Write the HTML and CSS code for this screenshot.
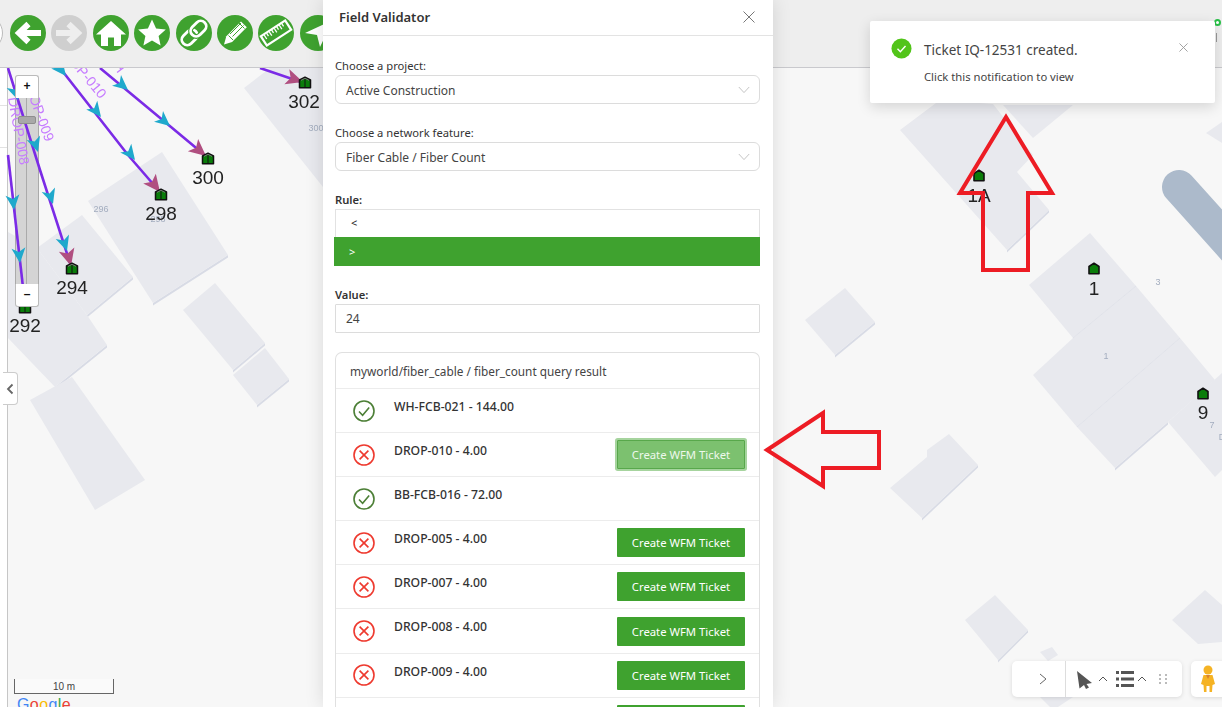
FILE: index.html
```html
<!DOCTYPE html>
<html lang="en">
<head>
<meta charset="utf-8">
<title>Field Validator</title>
<link rel="stylesheet" href="styles.css">
</head>
<body>
<svg class="defs" width="0" height="0" aria-hidden="true">
  <symbol id="ok" viewBox="0 0 22 22"><circle cx="11" cy="11" r="10" fill="none" stroke="#4c7f36" stroke-width="1.6"/><path d="M6 11.500l3.600 3.700L16.200 7.400" fill="none" stroke="#4c7f36" stroke-width="1.6"/></symbol>
  <symbol id="bad" viewBox="0 0 22 22"><circle cx="11" cy="11" r="10" fill="none" stroke="#ee3a2f" stroke-width="1.6"/><path d="M6.600 6.600l8.800 8.800M15.400 6.600l-8.800 8.800" fill="none" stroke="#ee3a2f" stroke-width="1.6"/></symbol>
  <symbol id="drop" viewBox="0 0 14 13"><path d="M7 1.200L1.500 4v7.800h11V4z" fill="#0a7d0a" stroke="#111" stroke-width="1.500" stroke-linejoin="round"/><path d="M7 2v9.500" stroke="#111" stroke-width="1"/><path d="M3 4.400L7 2.300l4 2.100" fill="none" stroke="#777" stroke-width="1"/></symbol>
  <symbol id="house" viewBox="0 0 14 13"><path d="M7 1.200L2 4.500v7.300h10V4.500z" fill="#0a7d0a" stroke="#111" stroke-width="1.600" stroke-linejoin="round"/></symbol>
  <symbol id="chev" viewBox="0 0 12 8"><path d="M.8 1l5.200 5.600L11.200 1" fill="none" stroke="#c4c4c4" stroke-width="1"/></symbol>
</svg>
<div class="app">
  <header class="toolbar">
    <span class="tool tool-white"></span>
    <span class="tool"><svg viewBox="0 0 36 36"><path d="M31 18H10M18.500 9L9 18l9.500 9" fill="none" stroke="#fff" stroke-width="6"/></svg></span>
    <span class="tool tool-off"><svg viewBox="0 0 36 36"><path d="M5 18h21M17.500 9L27 18l-9.500 9" fill="none" stroke="#eee" stroke-width="6"/></svg></span>
    <span class="tool"><svg viewBox="0 0 36 36"><path d="M18 6L3 19.500h5V31h7v-8.500h6V31h7V19.500h5z" fill="#fff"/></svg></span>
    <span class="tool"><svg viewBox="0 0 36 36"><path d="M18 4.500l4.100 8.900 9.700 1.100-7.200 6.500 2 9.500-8.600-4.900-8.600 4.900 2-9.500-7.200-6.500 9.700-1.100z" fill="#fff"/></svg></span>
    <span class="tool"><svg viewBox="0 0 36 36"><g transform="rotate(-45 18 18)" fill="none" stroke-width="2.800"><rect x="3" y="12.500" width="17.500" height="11" rx="5.500" stroke="#fff"/><rect x="15.500" y="12.500" width="17.500" height="11" rx="5.500" stroke="#3fa22f" stroke-width="5"/><rect x="15.500" y="12.500" width="17.500" height="11" rx="5.500" stroke="#fff"/></g></svg></span>
    <span class="tool"><svg viewBox="0 0 36 36"><path d="M7 29.500l2.300-8.300L24 6.500l5.800 5.800-14.700 14.700z" fill="#fff"/><path d="M11.500 20.500l4.500 4.500M13 19l11-11M15.500 21.500l11-11M21.500 7.500l6 6" fill="none" stroke="#3fa22f" stroke-width="1"/></svg></span>
    <span class="tool"><svg viewBox="0 0 36 36"><g transform="rotate(-33 18 18)"><rect x="3.500" y="12.500" width="29" height="11" fill="none" stroke="#fff" stroke-width="2.200"/><path d="M7 13v5M10 13v3.500M13 13v5M16 13v3.500M19 13v5M22 13v3.500M25 13v5M28 13v3.500" stroke="#fff" stroke-width="1.300"/></g></svg></span>
    <span class="tool"><svg viewBox="0 0 36 36"><path d="M33 5L5 18l12 2 3 12z" fill="#fff"/></svg></span>
  </header>
  <div class="rail"></div>
  <main class="map">
    <svg class="map-canvas" viewBox="0 68 1222 639" preserveAspectRatio="none">
      <g class="bld-side">
        <path d="M153 303l75-48 0 2.500-75 48z"/>
        <path d="M133 277l-46 38 0 2.500 46-38z"/>
        <path d="M107 345l-52 42 0 2.500 52-42z"/>
        <path d="M233 370l32-27 0 2.500-32 27z"/>
        <path d="M257 405l32-26 0 2.500-32 26z"/>
        <path d="M1115 468l53-46 0 2.500-53 46z"/>
        <path d="M922 518l56-53 0 2.500-56 53z"/>
        <path d="M1007 250l42-40 0 2.500-42 40z"/>
        <path d="M835 355l40-33 0 2.500-40 33z"/>
        <path d="M998 660l30-30 0 2.500-30 30z"/>
      </g>
      <g class="bld">
        <path d="M244 88l26-20h53v119z"/>
        <path d="M88 201l74-49 66 103-75 48z"/>
        <path d="M37 248l45-33 51 62-46 38z"/>
        <path d="M8 232l29 16 50 67 20 30-52 42-47-49z"/>
        <path d="M30 400l42-23 73 103-50 30z"/>
        <path d="M183 310l32-27 50 60-32 27z"/>
        <path d="M233 375l32-27 24 31-32 26z"/>
        <path d="M900 130l40-30 53 4 40 51-16 17 32 38-42 40z"/>
        <path d="M1003 105l30 33 40-33z"/>
        <path d="M1206 133l16-11v21z"/>
        <path d="M1029 285l61-52 46 53-63 52z"/>
        <path d="M1073 338l63-52 44 52-103 89-44-52z"/>
        <path d="M1077 427l103-89 35 42-47 42-53 46z"/>
        <path d="M1168 422l54-49v97l-7 7z"/>
        <path d="M890 488l37-31v-7l22-16 29 31-56 53z"/>
        <path d="M805 320l40-32 30 34-40 33z"/>
        <path d="M965 620l30-25 33 35-30 30z"/>
        <path d="M1172 620l33-30 17 15v37l-24 2z"/>
        <path d="M1040 652l12-5 6 8-10 6z"/>
        <path d="M1040 697h33l-15 10h-8z"/>
      </g>
      <path class="seam" d="M1073 338l63-52M1077 427l103-89"/>
      <path class="road" d="M1179 187L1240 255"/>
    </svg>
    <div class="zoom-track"></div>
    <svg class="map-canvas" viewBox="0 68 1222 639" preserveAspectRatio="none">
      <g class="route-text">
        <text transform="translate(56 47) rotate(50)">DROP-010</text>
        <text transform="translate(112 66) rotate(52)">H</text>
        <text transform="translate(22 78) rotate(70)">DROP-009</text>
        <text transform="translate(8 98) rotate(80)">DROP-008</text>
      </g>
      <g class="routes">
        <path d="M8 68L40 170L70 263"/>
        <path d="M8 155L25 305"/>
        <path d="M60 68L128 155L160 192"/>
        <path d="M100 68L165 122L207 157"/>
        <path d="M260 68L304 83"/>
      </g>
      <g class="head-teal">
        <path d="M0 0l-15-7 4 7-4 7z" transform="translate(18 100) rotate(72)"/>
        <path d="M0 0l-15-7 4 7-4 7z" transform="translate(38 152) rotate(72)"/>
        <path d="M0 0l-15-7 4 7-4 7z" transform="translate(53 204) rotate(72)"/>
        <path d="M0 0l-15-7 4 7-4 7z" transform="translate(67 251) rotate(72)"/>
        <path d="M0 0l-15-7 4 7-4 7z" transform="translate(14 210) rotate(84)"/>
        <path d="M0 0l-15-7 4 7-4 7z" transform="translate(20 263) rotate(84)"/>
        <path d="M0 0l-15-7 4 7-4 7z" transform="translate(66 76) rotate(52)"/>
        <path d="M0 0l-15-7 4 7-4 7z" transform="translate(101 117) rotate(52)"/>
        <path d="M0 0l-15-7 4 7-4 7z" transform="translate(135 160) rotate(52)"/>
        <path d="M0 0l-15-7 4 7-4 7z" transform="translate(128 90) rotate(40)"/>
        <path d="M0 0l-15-7 4 7-4 7z" transform="translate(170 126) rotate(40)"/>
      </g>
      <g class="head-end">
        <path d="M0 0l-17-8 4 8-4 8z" transform="translate(71 266) rotate(75)"/>
        <path d="M0 0l-17-8 4 8-4 8z" transform="translate(160 192) rotate(52)"/>
        <path d="M0 0l-17-8 4 8-4 8z" transform="translate(206 156) rotate(40)"/>
        <path d="M0 0l-17-8 4 8-4 8z" transform="translate(303 82) rotate(18)"/>
      </g>
      <g class="small-num">
        <text x="101" y="212">296</text>
        <text x="158" y="222">298</text>
        <text x="316" y="131">300</text>
        <text x="1158" y="285">3</text>
        <text x="1106" y="359">1</text>
        <text x="1212" y="428">7</text>
        <text x="1222" y="440">D</text>
      </g>
      <g>
        <use href="#drop" x="298" y="76" width="14" height="13"/>
        <use href="#drop" x="201" y="152" width="14" height="13"/>
        <use href="#drop" x="154" y="188" width="14" height="13"/>
        <use href="#drop" x="65" y="262" width="14" height="13"/>
        <use href="#drop" x="18" y="301" width="14" height="13"/>
        <use href="#house" x="972" y="169" width="14" height="13"/>
        <use href="#house" x="1087" y="262" width="14" height="13"/>
        <use href="#house" x="1196" y="387" width="14" height="13"/>
      </g>
      <g class="house-num">
        <text x="304" y="108">302</text>
        <text x="208" y="184">300</text>
        <text x="161" y="220">298</text>
        <text x="72" y="294">294</text>
        <text x="25" y="332">292</text>
        <text x="979" y="202">1A</text>
        <text x="1094" y="295">1</text>
        <text x="1203" y="419">9</text>
      </g>
    </svg>
    <div class="zoom">
      <span class="zoom-btn zoom-plus">+</span>
      <span class="zoom-gap"><span class="zoom-handle"></span></span>
      <span class="zoom-btn zoom-minus">–</span>
    </div>
    <div class="side-tab"><svg viewBox="0 0 8 12"><path d="M6.500 1.500L2 6l4.500 4.500" fill="none" stroke="#666" stroke-width="1.800"/></svg></div>
    <div class="scale">10 m</div>
    <div class="google"><b class="g-b">G</b><b class="g-r">o</b><b class="g-y">o</b><b class="g-b">g</b><b class="g-g">l</b><b class="g-r">e</b></div>
    <div class="bottom-tools">
      <div class="tools-box">
        <span class="tb-left"><svg class="i-chev" viewBox="0 0 8 12"><path d="M1 1l6 5-6 5" fill="none" stroke="#666" stroke-width="1"/></svg></span>
        <span class="tb-right">
          <svg class="i-cursor" viewBox="0 0 17 19"><path d="M1 1l15 12-5.500 1 2.500 3.500-3 1.500-2-4-4.500 3.500z" fill="#555"/></svg>
          <svg class="i-up" viewBox="0 0 10 6"><path d="M1 5l4-4 4 4" fill="none" stroke="#555" stroke-width="1"/></svg>
          <svg class="i-list" viewBox="0 0 18 16"><path d="M0 0h3v3H0zM5 0h13v3H5zM0 6.500h3v3H0zM5 6.500h13v3H5zM0 13h3v3H0zM5 13h13v3H5z" fill="#555"/></svg>
          <svg class="i-up" viewBox="0 0 10 6"><path d="M1 5l4-4 4 4" fill="none" stroke="#555" stroke-width="1"/></svg>
          <svg class="i-grip" viewBox="0 0 8 10"><path d="M0 0h2v2H0zM6 0h2v2H6zM0 4h2v2H0zM6 4h2v2H6zM0 8h2v2H0zM6 8h2v2H6z" fill="#bbb"/></svg>
        </span>
      </div>
      <div class="peg-box"><svg viewBox="0 0 16 28"><circle cx="8" cy="5" r="4.500" fill="#f5b324"/><path d="M3.500 10h9l2.500 9-2.500 1-.5 7H9.500v-6h-3v6H4l-.5-7L1 19z" fill="#f5b324"/><path d="M6 10l2 4 2-4z" fill="#d9822b"/></svg></div>
    </div>
  </main>
  <div class="status"><span class="status-dot"></span></div>

  <section class="panel">
    <h1 class="panel-title">Field Validator<svg class="panel-close" viewBox="0 0 12 12"><path d="M.5.500l11 11M11.500.500l-11 11" fill="none" stroke="#777" stroke-width="1"/></svg></h1>
    <div class="panel-body">
      <label class="field-label">Choose a project:</label>
      <div class="select">Active Construction<svg class="select-chev"><use href="#chev"/></svg></div>
      <label class="field-label">Choose a network feature:</label>
      <div class="select">Fiber Cable / Fiber Count<svg class="select-chev"><use href="#chev"/></svg></div>
      <label class="field-label field-strong">Rule:</label>
      <div class="rule-opt">&lt;</div>
      <div class="rule-opt rule-on">&gt;</div>
      <label class="field-label field-strong">Value:</label>
      <div class="input">24</div>
      <div class="card">
        <div class="card-head">myworld/fiber_cable / fiber_count query result</div>
        <div class="row"><svg class="row-icon"><use href="#ok"/></svg><span class="row-text">WH-FCB-021 - 144.00</span></div>
        <div class="row"><svg class="row-icon"><use href="#bad"/></svg><span class="row-text">DROP-010 - 4.00</span><button class="wfm wfm-active">Create WFM Ticket</button></div>
        <div class="row"><svg class="row-icon"><use href="#ok"/></svg><span class="row-text">BB-FCB-016 - 72.00</span></div>
        <div class="row"><svg class="row-icon"><use href="#bad"/></svg><span class="row-text">DROP-005 - 4.00</span><button class="wfm">Create WFM Ticket</button></div>
        <div class="row"><svg class="row-icon"><use href="#bad"/></svg><span class="row-text">DROP-007 - 4.00</span><button class="wfm">Create WFM Ticket</button></div>
        <div class="row"><svg class="row-icon"><use href="#bad"/></svg><span class="row-text">DROP-008 - 4.00</span><button class="wfm">Create WFM Ticket</button></div>
        <div class="row"><svg class="row-icon"><use href="#bad"/></svg><span class="row-text">DROP-009 - 4.00</span><button class="wfm">Create WFM Ticket</button></div>
        <div class="row"><span class="row-text"></span><button class="wfm"></button></div>
      </div>
    </div>
  </section>

  <aside class="notice">
    <svg class="notice-icon" viewBox="0 0 22 22"><circle cx="11" cy="11" r="10.500" fill="#52c41a"/><path d="M6.800 11.300l3 3 5.400-6" fill="none" stroke="#fff" stroke-width="1.500"/></svg>
    <div class="notice-text">
      <div class="notice-title">Ticket IQ-12531 created.</div>
      <div class="notice-sub">Click this notification to view</div>
    </div>
    <svg class="notice-close" viewBox="0 0 10 10"><path d="M.5.500l9 9M9.500.500l-9 9" fill="none" stroke="#999" stroke-width="1"/></svg>
  </aside>

  <svg class="annotations" viewBox="0 0 1222 707" aria-hidden="true">
    <path d="M1006 117L960 193h23v77h45v-77h24z"/>
    <path d="M767 450l56-37v19h56v36h-56v18z"/>
  </svg>
</div>
</body>
</html>
```
FILE: styles.css
```css
* { box-sizing: border-box; }
html, body { margin: 0; height: 100%; overflow: hidden; background: #fff; }
body { font-family: "Noto Sans", "Open Sans", sans-serif; color: #333; }
.defs { position: absolute; }
.app { position: relative; width: 1222px; height: 707px; overflow: hidden; display: flex; flex-direction: column; }

.toolbar { height: 68px; flex: none; background: #eeeeee; border-bottom: 1px solid #c9c9cd; display: flex; align-items: center; gap: 5.4px; padding-bottom: 2px; }
.tool { width: 36px; height: 36px; border-radius: 50%; background: #3fa22f; flex: none; display: block; }
.tool svg { display: block; width: 36px; height: 36px; }
.tool-white { background: #fff; border: 1px solid #bbb; margin-left: -33px; margin-right: 1.600px; }
.tool-off { background: #cfcfcf; }
.rail { position: absolute; left: 0; top: 105px; width: 7px; height: 43px; border-top: 1px solid #e2e2e2; border-bottom: 1px solid #e2e2e2; }

.map { flex: 1; position: relative; background: #f7f7f7; margin-left: 7px; border-left: 1px solid #c6c6c6; }
.map-canvas { position: absolute; left: -8px; top: 0; width: 1222px; height: 639px; display: block; filter: blur(.25px); }
.bld path { fill: #e8e9ee; }
.bld-side path { fill: #d8dbe5; }
.seam { fill: none; stroke: #e0e2e9; stroke-width: 1px; }
.road { fill: none; stroke: #acbacb; stroke-width: 34px; stroke-linecap: round; }
.routes path { fill: none; stroke: #7b2be6; stroke-width: 2.600px; }
.head-teal path { fill: #1fa9cc; }
.head-end path { fill: #b04f80; }
.route-text text { font: 14px "Liberation Sans", sans-serif; fill: #c67cff; }
.small-num text { font: 9px "Liberation Sans", sans-serif; fill: #a3adbf; text-anchor: middle; }
.house-num text { font: 19px "Liberation Sans", sans-serif; fill: #222; text-anchor: middle; }

.zoom-track { position: absolute; left: 7px; top: 30px; width: 24px; height: 186px; background: #d4d4d4; border-left: 1px solid #aaa; border-right: 1px solid #aaa; }
.zoom-track::after { content: ""; position: absolute; left: 10px; top: 0; bottom: 0; width: 1px; background: #aaa; }
.zoom { position: absolute; left: 7px; top: 7px; width: 24px; height: 232px; display: flex; flex-direction: column; }
.zoom-btn { flex: none; height: 23px; background: #fff; border: 1px solid #bbb; font: bold 12px/20px "Liberation Sans", sans-serif; color: #111; text-align: center; }
.zoom-plus { border-radius: 3px 3px 0 0; border-bottom: 0; }
.zoom-minus { border-radius: 0 0 3px 3px; border-top: 0; }
.zoom-gap { flex: 1; position: relative; }
.zoom-handle { position: absolute; left: 3px; top: 18px; width: 18px; height: 8px; background: #a8a8a8; border: 1px solid #8e8e8e; border-radius: 2px; }

.side-tab { position: absolute; left: -5px; top: 304px; width: 15px; height: 33px; background: #fff; border: 1px solid #ccc; border-left: 0; border-radius: 0 4px 4px 0; display: flex; align-items: center; justify-content: center; }
.side-tab svg { width: 8px; height: 12px; }

.scale { position: absolute; left: 6px; top: 611px; width: 100px; height: 15px; background: #fafafa; border: 1px solid #666; border-top: 0; font: 10px/15px "Liberation Sans", sans-serif; color: #444; text-align: center; }
.google { position: absolute; left: 9px; top: 625px; font: 16px/24px "Liberation Sans", sans-serif; letter-spacing: .4px; white-space: nowrap; }
.google b { font-weight: 400; }
.g-b { color: #4285f4; } .g-r { color: #ea4335; } .g-y { color: #fbbc05; } .g-g { color: #34a853; }

.bottom-tools { position: absolute; left: 1004px; top: 593px; display: flex; gap: 9px; }
.tools-box { width: 170px; height: 36px; background: #fff; border-radius: 5px; box-shadow: 0 1px 4px rgba(0,0,0,.12); display: flex; }
.tb-left { width: 54px; border-right: 1px solid #ddd; display: flex; align-items: center; justify-content: flex-end; padding-right: 18px; }
.i-chev { width: 8px; height: 12px; }
.tb-right { flex: 1; display: flex; align-items: center; padding-left: 10px; }
.i-cursor { width: 17px; height: 19px; }
.i-up { width: 10px; height: 6px; margin-left: 5px; }
.i-list { width: 18px; height: 16px; margin-left: 8px; }
.i-list + .i-up { margin-left: 3px; }
.i-grip { width: 8px; height: 10px; margin-left: 12px; }
.peg-box { width: 40px; height: 36px; background: #fff; border-radius: 5px; box-shadow: 0 1px 4px rgba(0,0,0,.12); padding: 4px 0 0 9px; }
.peg-box svg { width: 16px; height: 28px; display: block; }

.status { position: absolute; left: 1214px; top: 19px; }
.status-dot { display: block; width: 7px; height: 7px; border: 2px solid #29c048; border-radius: 50%; background: #fff; }
.status::after { content: ""; position: absolute; left: 2px; top: 14px; width: 1px; height: 9px; background: #999; }

.panel { position: absolute; left: 323px; top: 0; width: 450px; height: 707px; background: #fff; box-shadow: 0 0 18px rgba(0,0,0,.12); overflow: hidden; }
.panel-title { margin: 0; height: 36px; border-bottom: 1px solid #e3e3e3; padding: 0 18px 2px 16px; display: flex; align-items: center; justify-content: space-between; font-size: 13px; font-weight: 600; color: #333; }
.panel-close { width: 12px; height: 12px; }
.panel-body { padding: 21px 13px 0 12px; }
.field-label { display: block; height: 18px; font-size: 11.200px; line-height: 18px; color: #333; }
.field-strong { font-weight: 600; }
.select { height: 29px; margin-bottom: 20px; border: 1px solid #dcdcdc; border-radius: 6px; padding: 2px 10px 0; font-size: 12px; line-height: 24px; color: #444; display: flex; justify-content: space-between; align-items: center; }
.select-chev { width: 12px; height: 8px; margin: -2px -1px 0 0; }
.rule-opt { height: 28px; border: 1px solid #e2e2e2; border-bottom: 0; padding-left: 15px; font-size: 11px; line-height: 26px; color: #222; }
.rule-on { height: 29px; margin: 0 0 20px -1px; background: #3fa22f; border: 0; color: #fff; padding-left: 15px; line-height: 29px; }
.input { height: 29px; margin-bottom: 19px; border: 1px solid #dcdcdc; border-radius: 1px; padding: 0 10px; font-size: 12px; line-height: 27px; color: #444; }
.card { border: 1px solid #e0e0e0; border-radius: 7px 7px 0 0; border-bottom: 0; }
.card-head { height: 36px; padding-left: 14px; font-size: 11.800px; line-height: 37px; color: #444; border-bottom: 1px solid #ececec; }
.row { height: 44.100px; border-bottom: 1px solid #ececec; padding: 0 14px 0 17px; display: flex; align-items: center; }
.row-icon { width: 22px; height: 22px; flex: none; margin-right: 19px; }
.row-text { flex: 1; align-self: flex-start; padding-top: 9px; font-size: 12.200px; line-height: 18px; font-weight: 500; color: #333; }
.wfm { width: 128px; height: 29px; padding: 0; background: #3fa22f; border: 0; border-radius: 1px; color: #fff; font: 11.300px "Noto Sans", sans-serif; }
.wfm-active { background: #7cc16f; border: 1px solid #58a84b; box-shadow: 0 0 0 2px #a6d49e; color: #eef8ec; }

.notice { position: absolute; left: 870px; top: 21px; width: 345px; height: 82px; background: #fff; border-radius: 2px; box-shadow: 0 4px 14px rgba(0,0,0,.14); display: flex; padding: 17px 27px 0 21px; }
.notice-icon { width: 21px; height: 21px; flex: none; margin-right: 12px; }
.notice-text { flex: 1; padding-top: 1px; }
.notice-title { font-size: 13.500px; line-height: 22px; color: #444; }
.notice-sub { margin-top: 8px; font-size: 11.250px; line-height: 16px; color: #444; }
.notice-close { width: 9px; height: 9px; margin-top: 5px; }

.annotations { position: absolute; left: 0; top: 0; width: 1222px; height: 707px; pointer-events: none; }
.annotations path { fill: none; stroke: #ed1c24; stroke-width: 4px; }
```
